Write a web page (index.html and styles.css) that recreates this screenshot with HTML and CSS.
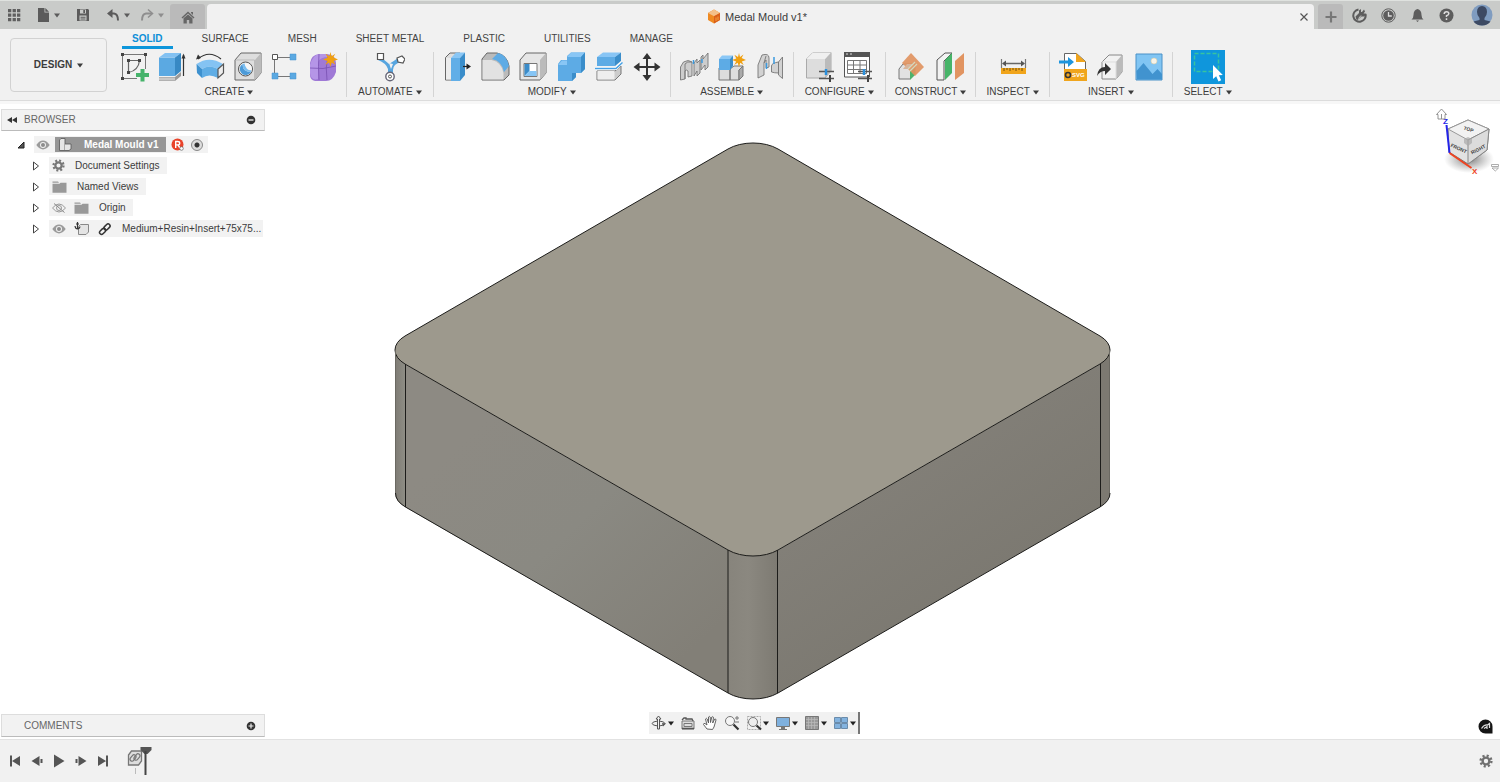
FILE: index.html
```html
<!DOCTYPE html>
<html lang="en">
<head>
<meta charset="utf-8">
<title>Medal Mould v1*</title>
<link rel="stylesheet" href="styles.css">
</head>
<body>
<svg class="defs" aria-hidden="true">
  <defs>
    <linearGradient id="gLeft" x1="0.1" y1="0.3" x2="0.75" y2="1">
      <stop offset="0" stop-color="#8d8a83"/><stop offset=".45" stop-color="#8a8982"/><stop offset="1" stop-color="#827f77"/>
    </linearGradient>
    <linearGradient id="gRight" x1="0.3" y1="0.2" x2="0.7" y2="0.8">
      <stop offset="0" stop-color="#84817a"/><stop offset="1" stop-color="#7a776f"/>
    </linearGradient>
    <linearGradient id="gFront" x1="0" x2="1">
      <stop offset="0" stop-color="#87847c"/><stop offset=".4" stop-color="#8b8880"/><stop offset="1" stop-color="#7d7a72"/>
    </linearGradient>
    <linearGradient id="gSideL" x1="0" x2="1"><stop offset="0" stop-color="#7e7b74"/><stop offset="1" stop-color="#8e8d85"/></linearGradient>
    <radialGradient id="gShadow"><stop offset="0" stop-color="#555" stop-opacity=".8"/><stop offset="1" stop-color="#888" stop-opacity="0"/></radialGradient>
    <symbol id="caret" viewBox="0 0 6 5"><path d="M0 .5h6L3 4.500z" fill="currentColor"/></symbol>
    <symbol id="eye" viewBox="0 0 14 10"><path d="M.3 5Q3.500.6 7 .6T13.700 5Q10.500 9.400 7 9.400T.3 5z" fill="#9b9b9b"/><circle cx="7" cy="5" r="3" fill="#f1f1f1"/><circle cx="7" cy="5" r="2" fill="#8c8c8c"/></symbol>
    <symbol id="folder" viewBox="0 0 15 12"><path d="M.5.5h5.500l1 1.200H.5zM.5 2.700h7l1-1h6v10H.5z" fill="#999"/></symbol>
    <symbol id="gear" viewBox="0 0 14 14"><g fill="none" stroke="currentColor"><circle cx="7" cy="7" r="3.400" stroke-width="2.400"/><circle cx="7" cy="7" r="5.400" stroke-width="2.400" stroke-dasharray="2.120 2.120"/></g></symbol>
    <symbol id="closed" viewBox="0 0 8 10"><path d="M1.500 1L6.500 5 1.500 9z" fill="#fff" stroke="#444"/></symbol>
    <symbol id="burst" viewBox="0 0 14 14"><path d="M7 0l1 4 3.500-2.400L9.600 5 14 7 9.800 8.500l1.900 3.400L8.200 9.800 7 14 5.700 9.800 2.200 11.900l2-3.500L0 7l4.300-1.600L2.400 1.700 6 4z" fill="#f0a010"/></symbol>
  </defs>
</svg>

<header class="titlebar">
  <nav class="quick" aria-label="Quick access">
    <button class="tool" aria-label="Data panel"><svg width="14" height="14" fill="#5f5f5f"><path d="M1 1h3.300v3.300H1zM5.600 1h3.300v3.300H5.600zM10 1h3.300v3.300H10zM1 5.500h3.300v3.300H1zM5.600 5.500h3.300v3.300H5.600zM10 5.500h3.300v3.300H10zM1 10h3.300v3.300H1zM5.600 10h3.300v3.300H5.600zM10 10h3.300v3.300H10z"/></svg></button>
    <button class="tool" aria-label="File"><svg width="14" height="16"><path d="M2 1h6.500v4.500H13V15H2z" fill="#5b5b5b"/><path d="M9.300 1L13 4.700H9.300z" fill="#5b5b5b"/></svg><svg class="caret" width="6" height="5"><use href="#caret"/></svg></button>
    <button class="tool" aria-label="Save"><svg width="16" height="14"><path d="M2 1h11l1 1v11H2z" fill="#5b5b5b"/><path d="M5 1.500h6v4H5zM4.500 7.500h7v5h-7z" fill="#c9cbc9"/><path d="M8.300 2h1.700v3H8.300zM5.500 8.800h5v1h-5zM5.500 10.600h5v1h-5z" fill="#5b5b5b"/></svg></button>
    <span class="history">
      <button class="tool" aria-label="Undo"><svg width="14" height="14"><path d="M5 5.500h3q4 .5 4 7" fill="none" stroke="#5b5b5b" stroke-width="2"/><path d="M6.500 1v9L1 5.500z" fill="#5b5b5b"/></svg><svg class="caret" width="6" height="5"><use href="#caret"/></svg></button>
      <button class="tool faded" aria-label="Redo"><svg width="14" height="14"><path d="M12 5.500H6q-4 .5-4 7" fill="none" stroke="currentColor" stroke-width="2"/><path d="M8 1.500L12.500 5.500 8 9.500" fill="none" stroke="currentColor" stroke-width="1.500"/></svg><svg class="caret" width="6" height="5"><use href="#caret"/></svg></button>
    </span>
  </nav>
  <button class="hometab" aria-label="Home"><svg width="14" height="13"><path d="M7 .5l6.500 6-1 1L7 2.500l-5.500 5-1-1z" fill="#666"/><path d="M10 1h2v3l-2-2zM2.500 7.300L7 3.500l4.500 3.800V12.500h-3.300V9H5.800v3.500H2.500z" fill="#666"/></svg></button>
  <div class="doctab">
    <h1 class="doctitle"><svg width="14" height="15"><path d="M1 4l6-3.500L13 4v7l-6 3.500L1 11z" fill="#ef8a22"/><path d="M1 4l6-3.500L13 4 7 7.200z" fill="#f4c08a"/><path d="M7 7.200L13 4v7l-6 3.500z" fill="#d9601c"/><path d="M9 8.500v3.500M11 7.500V11" stroke="#f7a13c"/></svg><span>Medal Mould v1*</span></h1>
    <button class="close" aria-label="Close"><svg width="10" height="10"><path d="M1.500 1.500l7 7M8.500 1.500l-7 7" stroke="#555" stroke-width="1.200"/></svg></button>
  </div>
  <button class="newtab" aria-label="New tab"><svg width="12" height="12"><path d="M6 .5v11M.5 6h11" stroke="#777" stroke-width="2.200"/></svg></button>
  <nav class="account" aria-label="Account">
    <button class="tool" aria-label="Extensions"><svg width="15" height="15"><path d="M6.500 1.400A6.200 6.200 0 1 0 13.500 6" fill="none" stroke="#5d5d5d" stroke-width="2"/><path d="M3.500 8.500L7 5V2.500l2-1.500v3h1l2-2.500 1 2-1.500 2 2.500 0-1.500 3H9.500L5.500 12q-1.800-1-2-3.500z" fill="#5d5d5d"/><path d="M6.500 10.500l2.500-3" stroke="#c9cbc9"/></svg></button>
    <button class="tool" aria-label="Job status"><svg width="15" height="15"><circle cx="7.500" cy="7.500" r="6.700" fill="none" stroke="#5d5d5d"/><circle cx="7.500" cy="7.500" r="5.300" fill="#5d5d5d"/><path d="M7.500 4v4h3.300" fill="none" stroke="#ddd" stroke-width="1.300"/></svg></button>
    <button class="tool" aria-label="Notifications"><svg width="15" height="15"><path d="M7.500 1q4 1 4 6 0 3 2 4.500h-12Q3.500 10 3.500 7q0-5 4-6zM6 12.500h3L7.500 14z" fill="#5d5d5d"/></svg></button>
    <button class="tool" aria-label="Help"><svg width="15" height="15"><circle cx="7.500" cy="7.500" r="7" fill="#5d5d5d"/><path d="M5.200 6q0-2.300 2.300-2.300T9.800 5.700Q9.800 7 7.500 7.700v1.200M7.500 10.300v1.700" fill="none" stroke="#ddd" stroke-width="1.500"/></svg></button>
    <button class="tool avatar" aria-label="Profile"><svg width="22" height="22"><circle cx="11" cy="11" r="10.500" fill="#7f9cc0"/><path d="M11 2q5 .3 5 6 0 3.500-2.500 6v2l6 1.500Q16.500 21.500 11 21.500T2.500 17.500l6-1.500v-2Q6 11.500 6 8q0-5.700 5-6z" fill="#3d4a63"/></svg></button>
  </nav>
</header>

<section class="ribbon">
  <button class="workspace">DESIGN <svg class="caret" width="6" height="5"><use href="#caret"/></svg></button>
  <div class="ribbon-main">
    <nav class="tabs" aria-label="Toolbar tabs">
      <a class="tab active" href="#solid">SOLID</a><a class="tab" href="#surface">SURFACE</a><a class="tab" href="#mesh">MESH</a><a class="tab" href="#sheet">SHEET METAL</a><a class="tab" href="#plastic">PLASTIC</a><a class="tab" href="#utilities">UTILITIES</a><a class="tab" href="#manage">MANAGE</a>
    </nav>
    <div class="groups">
      <div class="group first">
        <div class="icons">
          <button class="tool" aria-label="Create sketch"><svg width="30" height="32"><path d="M3 3.500h24M3.500 3v24M26.500 3v15M3 27.500h15" fill="none" stroke="#777"/><path d="M9.500 9.500h11q-1 10-11 12z" fill="none" stroke="#666" stroke-width="1.200"/><path d="M2 2h3v3H2zM25 2h3v3h-3zM2 26h3v3H2zM8 8h3v3H8zM19 8h3v3h-3zM8 20h3v3H8z" fill="#444"/><path d="M21.500 18h4v4h4.500v4h-4.500v4.500h-4V26H17v-4h4.500z" fill="#46b36b"/></svg></button>
          <button class="tool" aria-label="Extrude"><svg width="30" height="32"><path d="M2 26h16l6-5v4l-6 5H2z" fill="#999"/><path d="M2 26.500h16v3H2z" fill="#c8c8c8"/><path d="M2 6.500h16V25H2z" fill="#5ba9e2"/><path d="M2 6.500L8 2h16l-6 4.500z" fill="#82c1f2"/><path d="M18 6.500L24 2v18l-6 5z" fill="#3889c4"/><path d="M26.500 25V4" stroke="#333" stroke-width="1.200"/><path d="M24.500 7.500l2-5 2 5z" fill="#333"/></svg></button>
          <button class="tool" aria-label="Revolve"><svg width="30" height="32"><path d="M3 8Q14-1.500 26 8" fill="none" stroke="#333" stroke-width="1.200"/><path d="M1 8.500l2-5 3 3.500z" fill="#333"/><path d="M1.500 13Q14 4.500 28 13l-5 5Q14 13 7 18z" fill="#84c3f3"/><path d="M1.500 13L7 18v9L2 22z" fill="#3d91cf"/><path d="M7 18q7-5 16 0v9q-9-5-16 0z" fill="#5fade5"/><path d="M23 18l5.500-5v9L23 27z" fill="#eee" stroke="#555" stroke-width="1.200"/></svg></button>
          <button class="tool" aria-label="Hole"><svg width="30" height="32"><path d="M2 9l6-7h20v20l-6 7H2z" fill="#dedede" stroke="#666"/><path d="M2.500 9h19v19.500" fill="none" stroke="#bbb"/><path d="M22 9l6-7v20l-6 7z" fill="#bbb"/><circle cx="12.500" cy="18" r="7" fill="#eee" stroke="#555"/><path d="M9.500 13a6 6 0 1 0 8.500 8q-8.500 0-8.500-8z" fill="#4b9ad8"/><path d="M11.500 12.500a5.500 5.500 0 0 1 7 7q-6.500-.5-7-7z" fill="#f6f6f6"/><path d="M9.500 13q0 8 8.500 8l.5-1.500q-6-.5-7-7z" fill="#79bdf0"/></svg></button>
          <button class="tool" aria-label="Rectangular pattern"><svg width="30" height="32"><path d="M7 6.500h14M3.500 9v14M7 25.500h14" stroke="#777"/><path d="M1.500 3.500h5v5h-5z" fill="#fff" stroke="#555"/><path d="M19 3h6v6h-6zM1 22h6v6H1zM19 22h6v6h-6z" fill="#5ba9e2" stroke="#4592cc" stroke-width=".5"/></svg></button>
          <button class="tool" aria-label="Create form"><svg width="30" height="32"><path d="M1 12Q2 4 10 3h8q9 1 9 9v9q-3 9-10 9H6q-5-1-5-6z" fill="#9f79d6"/><path d="M1 14Q4 4 10 3h7l3 3q-9 0-11 5v17q-7 2-8-6z" fill="#bfa1ee" opacity=".7"/><path d="M10 3q-1 12 0 26M19 5q-3 12-1 24M1 17q13 2 26-2" fill="none" stroke="#7850b1" stroke-width=".8"/><use href="#burst" x="14" y="1" width="15" height="15"/></svg></button>
        </div>
        <button class="label">CREATE <svg class="caret" width="6" height="5"><use href="#caret"/></svg></button>
      </div>
      <div class="group wide">
        <div class="icons"><button class="tool" aria-label="Automated modeling"><svg width="30" height="32"><path d="M4 5q8 6 10 8 5-3 9-6l3 4q-8 2-8 8v6h-5v-7q-2-6-10-9z" fill="#57a5df"/><path d="M14 12l4 1-2 5z" fill="#f1f1f1"/><path d="M2.500 2.500h6v6h-6z" fill="#fff" stroke="#555" stroke-width="1.200"/><path d="M22 7l5-2 3 3-2 4-5-1z" fill="#fff" stroke="#555" stroke-width="1.200"/><circle cx="15" cy="25.500" r="4.200" fill="#fff" stroke="#667" stroke-width="1.400"/><circle cx="15" cy="25.500" r="1.500" fill="none" stroke="#555"/></svg></button></div>
        <button class="label">AUTOMATE <svg class="caret" width="6" height="5"><use href="#caret"/></svg></button>
      </div>
      <div class="group">
        <div class="icons">
          <button class="tool" aria-label="Press pull"><svg width="30" height="32"><path d="M3.500 6.500L8 2h10l-4 5v22H3.500z" fill="#ddd" stroke="#666"/><path d="M4 7h5v21.500H4z" fill="#ececec"/><path d="M9 7h9v23H9z" fill="#61aee7"/><path d="M9 7l5-5.500h9L18 7z" fill="#88c6f5"/><path d="M18 7l5-5.500V24l-5 6z" fill="#3a8dca"/><path d="M21 15.500h5" stroke="#222" stroke-width="1.200"/><path d="M24.500 12.500l4.500 3-4.500 3z" fill="#222"/></svg></button>
          <button class="tool" aria-label="Fillet"><svg width="30" height="32"><path d="M2 8l5-6h10q10 2 12 13v9l-5 5H2z" fill="#bbb" stroke="#666"/><path d="M2.500 9h9q10 2 12 13v6.500h-21z" fill="#e2e2e2"/><path d="M12 8l6-6q9 2 11 13l-5 6Q22 10 12 8z" fill="#5eabe5"/></svg></button>
          <button class="tool" aria-label="Shell"><svg width="30" height="32"><path d="M2 9l6-7h20v20l-6 7H2z" fill="#e6e6e6" stroke="#666"/><path d="M22 9l6-7v20l-6 7z" fill="#bbb"/><path d="M6 12.500h13v13H6z" fill="#fff" stroke="#777"/><path d="M6.500 13h5v7l-5 5z" fill="#3a8cca"/><path d="M6.500 25l5-5h7v5z" fill="#86c5f5"/></svg></button>
          <button class="tool" aria-label="Combine"><svg width="30" height="32"><path d="M2 13l3-4h6V5l4-3.500h14V18l-4 4h-5v4l-4 4H2z" fill="#5dabe5"/><path d="M11 6l4-4.500h14L25 6zM2 14l4-4.500h5V14z" fill="#89c6f5"/><path d="M25 6l4-4.500V18l-4 4zM16 22h4v4l-4 4z" fill="#3a8dca"/></svg></button>
          <button class="tool" aria-label="Offset face"><svg width="30" height="32"><path d="M3 20h18l6-5v8l-6 6H3z" fill="#ccc" stroke="#777"/><path d="M3.500 20h17v8.500h-17z" fill="#eee"/><path d="M3 6h18v9H3z" fill="#5dabe5"/><path d="M3 6l6-4.500h18L21 6z" fill="#88c5f5"/><path d="M21 6l6-4.500V10l-6 5z" fill="#3a8dca"/><path d="M1 17.500h21l6-6" fill="none" stroke="#fff" stroke-width="3"/><path d="M1 17.500h21l6.500-6" fill="none" stroke="#45a0e4" stroke-width="1.500"/></svg></button>
          <button class="tool" aria-label="Move"><svg width="30" height="32"><path d="M15 5v22M4 16h22" stroke="#333" stroke-width="2"/><path d="M15 2l4.500 6h-9zM15 30l4.500-6h-9zM1.500 16l6-4.500v9zM28.500 16l-6-4.500v9z" fill="#333"/></svg></button>
        </div>
        <button class="label">MODIFY <svg class="caret" width="6" height="5"><use href="#caret"/></svg></button>
      </div>
      <div class="group">
        <div class="icons">
          <button class="tool" aria-label="New component"><svg width="30" height="32"><g fill="#cdcdcd" stroke="#777" stroke-width=".9"><path d="M1.500 16l3-5q5-3 8.500 0v14l-4 1v-6q-2-2-3 0v8l-4.500 1z"/><path d="M6 28V13q2-3 7-2" fill="none"/><path d="M15 12l3-4v4l3-3v13l-3 3v-5l-3 5z"/><path d="M22 6l2-2v4l5-6v14l-3 3v-5l-4 5z"/></g><path d="M14.500 9v4M23 8v4" stroke="#3b9ae0" stroke-width="1.500"/></svg></button>
          <button class="tool" aria-label="Joint"><svg width="30" height="32"><path d="M2 17h11v12H2zM13 18l4-3h9l-4 4v10h-9z" fill="#ddd" stroke="#777"/><path d="M22 19l4-4v10l-4 4z" fill="#aaa" stroke="#777"/><path d="M2 8h11v11H2z" fill="#5dabe5"/><path d="M2 8l3-3.500h11L13 8z" fill="#8ac7f6"/><path d="M13 8l3-3.500V15l-3 4z" fill="#3a8dca"/><use href="#burst" x="15" y="2" width="14" height="14"/></svg></button>
          <button class="tool" aria-label="As-built joint"><svg width="30" height="32"><g fill="#d2d2d2" stroke="#777" stroke-width=".9"><path d="M3 14l4-10q7-2 7 3v9l-3 1V9L9 12v12l-6 3z"/><path d="M9 12l2-7" fill="none"/><path d="M27.500 6l-4 5v13l4 3.500z"/><path d="M23.500 11q-7 1-7 4v6q3 1 7 1z"/></g><path d="M11.500 12v6M19 6v7" stroke="#3b9ae0" stroke-width="1.500"/></svg></button>
        </div>
        <button class="label">ASSEMBLE <svg class="caret" width="6" height="5"><use href="#caret"/></svg></button>
      </div>
      <div class="group wide">
        <div class="icons">
          <button class="tool" aria-label="Configure model"><svg width="30" height="32"><path d="M1.500 8L8 1.500h18V20l-6 7H1.500z" fill="#ddd" stroke="#aaa"/><path d="M20 8l6-6.500V20l-6 7z" fill="#bbb"/><path d="M1.500 8L8 1.500h18L20 8z" fill="#f0f0f0"/><path d="M14 20.500h15M14 27.500h15" stroke="#555" stroke-width="1.500"/><path d="M25 24v7" stroke="#444" stroke-width="2"/><path d="M21 18v6" stroke="#2b90dd" stroke-width="2.500"/></svg></button>
          <button class="tool" aria-label="Configuration table"><svg width="30" height="32"><path d="M1.500 2h25v24h-25z" fill="#fff" stroke="#555"/><path d="M1 1h26v5H1z" fill="#555"/><path d="M3 3h2M7 3h2" stroke="#ddd"/><path d="M4.500 9.500h19v13h-19zM4 14h20M4 18.500h20M10.500 9v14M17 9v14" fill="none" stroke="#777"/><path d="M15 20.500h14M15 27.500h14" stroke="#555" stroke-width="1.500"/><path d="M25 24v7" stroke="#444" stroke-width="2"/><path d="M21 18v6" stroke="#2b90dd" stroke-width="2.500"/></svg></button>
        </div>
        <button class="label">CONFIGURE <svg class="caret" width="6" height="5"><use href="#caret"/></svg></button>
      </div>
      <div class="group snug">
        <div class="icons">
          <button class="tool" aria-label="Offset plane"><svg width="30" height="32"><path d="M2 18l4-5h12v10l-5 5H2z" fill="#e2e2e2" stroke="#777"/><path d="M13 19l5-5v10l-5 5z" fill="#4db26d"/><path d="M14 2l13 14-9 9-13-13z" fill="#e19461" opacity=".92"/><path d="M6 18l4-5h6l-5 5z" fill="#d8b59c"/><path d="M11 18l7-7M13 20l7-7" stroke="#d5d8bd" stroke-width="1.300"/></svg></button>
          <button class="tool" aria-label="Midplane"><svg width="30" height="32"><path d="M2 9l8-7h7L9 10v19H2z" fill="#f2f2f2" stroke="#555"/><path d="M10 9l7-7v20l-7 7z" fill="#47b469"/><path d="M20 10l9-8v20l-9 7z" fill="#e19461"/></svg></button>
        </div>
        <button class="label">CONSTRUCT <svg class="caret" width="6" height="5"><use href="#caret"/></svg></button>
      </div>
      <div class="group mid">
        <div class="icons"><button class="tool" aria-label="Measure"><svg width="30" height="32"><path d="M3.500 8v9M27.500 8v9" stroke="#777" stroke-width="1.200"/><path d="M6 12.500h19" stroke="#666" stroke-width="1.500"/><path d="M4 12.500l4-3v6zM27 12.500l-4-3v6z" fill="#555"/><path d="M3 17h25v6H3z" fill="#f1a51b"/><path d="M6 17v3M9 17v2M12 17v3M15 17v2M18 17v3M21 17v2M24 17v3" stroke="#75500e"/></svg></button></div>
        <button class="label">INSPECT <svg class="caret" width="6" height="5"><use href="#caret"/></svg></button>
      </div>
      <div class="group">
        <div class="icons">
          <button class="tool" aria-label="Insert SVG"><svg width="30" height="32"><path d="M6.500 2.500h12l9 8v18h-21z" fill="#fff" stroke="#666"/><path d="M18 2l10 9H18z" fill="#f0a51d"/><path d="M6 18h23v12H6z" fill="#f0a51d"/><path d="M1 9.500h9V6l6 5-6 5v-3.500H1z" fill="#1e95de"/><circle cx="10" cy="24" r="2.500" fill="none" stroke="#333" stroke-width="1.600"/><text class="svgbadge" x="14" y="26">SVG</text></svg></button>
          <button class="tool" aria-label="Insert derive"><svg width="30" height="32"><path d="M6 11l7-7h13v17l-6 7H6z" fill="#f2f2f2" stroke="#888"/><path d="M20 11l6-7v17l-6 7z" fill="#bbb"/><path d="M6 11h14v17" fill="none" stroke="#ddd"/><path d="M1 25q1-9 8-9v-4l6 6-6 6v-4q-5 0-8 5z" fill="#333"/></svg></button>
          <button class="tool" aria-label="Canvas"><svg width="30" height="32"><path d="M2 3h26v26H2z" fill="#81c5f3" stroke="#4a91c7"/><path d="M2.500 20l7-8 9 11 5-5 4.500 5v5.500h-25z" fill="#4193cf"/><circle cx="20" cy="10" r="3" fill="#f7f3e8" stroke="#d8cda7" stroke-width=".6"/></svg></button>
        </div>
        <button class="label">INSERT <svg class="caret" width="6" height="5"><use href="#caret"/></svg></button>
      </div>
      <div class="group wide last">
        <div class="icons"><button class="tool select" aria-label="Select"><svg width="34" height="34"><path d="M3.500 3.500h24v18h-24z" fill="none" stroke="#37c3a0" stroke-width="1.500" stroke-dasharray="4 2"/><path d="M22 15v14l3.200-2.800 2.300 5.300 2.700-1.300-2.400-5 4-.2z" fill="#fff"/></svg></button></div>
        <button class="label">SELECT <svg class="caret" width="6" height="5"><use href="#caret"/></svg></button>
      </div>
    </div>
  </div>
</section>

<main class="viewport">
  <svg class="model" viewBox="0 104 1500 635" role="img" aria-label="Medal mould body">
    <path d="M395 350V493a35 20 0 0 0 10 14V364z" fill="url(#gSideL)"/>
    <path d="M405 364V507L728 693V550z" fill="url(#gLeft)"/>
    <path d="M728 550V693a35 20 0 0 0 50 0V550z" fill="url(#gFront)"/>
    <path d="M778 550V693L1100 507V364z" fill="url(#gRight)"/>
    <path d="M1100 364V507a35 20 0 0 0 10-14V350z" fill="#7c7971"/>
    <path d="M728 149a35 20 0 0 1 50 0L1100 336a35 20 0 0 1 0 28L778 550a35 20 0 0 1-50 0L405 364a35 20 0 0 1 0-28z" fill="#9d998d" stroke="#1c1c1a"/>
    <path d="M395.500 493a35 20 0 0 0 10 14L728 693a35 20 0 0 0 50 0L1100 507a35 20 0 0 0 10-14M405.500 364V507M728 550V693M777.500 550V693M1100.500 364V507" fill="none" stroke="#1c1c1a"/>
    <path d="M395.500 350V493M1109.500 350V493" stroke="#6b6962" fill="none"/>
  </svg>

  <aside class="side">
    <section class="browser">
      <header class="panel">
        <button class="tool collapse" aria-label="Collapse"><svg width="10" height="6"><path d="M5 0v6L0 3zM10 0v6L5 3z" fill="#333"/></svg></button>
        <h2 class="panel-title">BROWSER</h2>
        <button class="tool" aria-label="Minimise"><svg width="10" height="10"><circle cx="5" cy="5" r="4.300" fill="#333"/><path d="M2.500 5h5" stroke="#eee" stroke-width="1.300"/></svg></button>
      </header>
      <ul class="tree">
        <li class="row root">
          <button class="tool expander" aria-label="Collapse"><svg width="8" height="8"><path d="M7 1v6H1z" fill="#555" stroke="#222"/></svg></button>
          <span class="item">
            <svg width="14" height="10"><use href="#eye"/></svg>
            <span class="picked"><svg width="16" height="15"><path d="M2.500 3l1.500-1.500h4V7h6v5L12 13.500H2.500z" fill="#e6e6e6" stroke="#555" stroke-width=".8"/><path d="M7.500 3v10" stroke="#aaa"/></svg><span>Medal Mould v1</span></span>
            <svg class="badge" width="13" height="13"><circle cx="6.500" cy="6.500" r="6" fill="#e9432a"/><path d="M4.700 10V3.500h2q2 0 2 1.700t-2 1.700h-2M7 7l2 3" fill="none" stroke="#fff" stroke-width="1.400"/><circle cx="10.500" cy="10.500" r="1.800" fill="#fff" stroke="#666" stroke-width=".7"/></svg>
            <input class="radio" type="radio" checked aria-label="Activate Medal Mould v1">
          </span>
        </li>
        <li class="row"><button class="tool expander" aria-label="Expand"><svg width="8" height="10"><use href="#closed"/></svg></button><span class="item"><svg class="grey" width="13" height="13"><use href="#gear"/></svg><span class="name">Document Settings</span></span></li>
        <li class="row"><button class="tool expander" aria-label="Expand"><svg width="8" height="10"><use href="#closed"/></svg></button><span class="item"><svg width="15" height="12"><use href="#folder"/></svg><span class="name">Named Views</span></span></li>
        <li class="row"><button class="tool expander" aria-label="Expand"><svg width="8" height="10"><use href="#closed"/></svg></button><span class="item"><svg width="14" height="10"><path d="M.5 5Q7-3 13.500 5 7 13 .5 5z" fill="none" stroke="#999"/><circle cx="7" cy="5" r="2.500" fill="none" stroke="#999"/><path d="M2 .5l10.500 9" stroke="#888"/></svg><svg width="15" height="12"><use href="#folder"/></svg><span class="name">Origin</span></span></li>
        <li class="row long"><button class="tool expander" aria-label="Expand"><svg width="8" height="10"><use href="#closed"/></svg></button><span class="item"><svg width="14" height="10"><use href="#eye"/></svg><svg width="16" height="15"><path d="M4.500 5.500l2-2h8v7.500L12 13.500H4.500z" fill="#e4e4e4" stroke="#888"/><path d="M3.500 1v6.500M1 5q.5 3 2.500 3T6 5.500M2 3h3" fill="none" stroke="#333" stroke-width="1.200"/></svg><svg width="14" height="14"><g fill="none" stroke="#333" stroke-width="1.500"><rect x="5.500" y="3" width="7" height="4" rx="2" transform="rotate(-45 9 5)"/><rect x="1" y="7" width="7" height="4" rx="2" transform="rotate(-45 5 9)"/></g></svg><span class="name">Medium+Resin+Insert+75x75...</span></span></li>
      </ul>
    </section>
    <section class="panel comments">
      <h2 class="panel-title">COMMENTS</h2>
      <button class="tool" aria-label="Add comment"><svg width="10" height="10"><circle cx="5" cy="5" r="4.300" fill="#333"/><path d="M2.500 5h5M5 2.500v5" stroke="#eee" stroke-width="1.200"/></svg></button>
    </section>
  </aside>

  <nav class="navbar" aria-label="View controls">
    <button class="tool" aria-label="Orbit"><svg width="16" height="16"><ellipse cx="7.500" cy="8.500" rx="6.300" ry="2.300" fill="none" stroke="#555"/><path d="M6.500 14V4H5l2.500-3L10 4H8.500v10z" fill="#f1f1f1" stroke="#555"/><path d="M11 8l4 .5-3 3z" fill="#555"/></svg><svg class="caret" width="6" height="5"><use href="#caret"/></svg></button>
    <button class="tool" aria-label="Look at"><svg width="16" height="16"><path d="M2 6h12v8H2zM4 8.500h8v3H4z" fill="#ddd" stroke="#777"/><path d="M2 5l2-2h2v1h6l1 2M2 13.500h12" fill="none" stroke="#555" stroke-width="1.300"/></svg></button>
    <button class="tool" aria-label="Pan"><svg width="16" height="16"><path d="M5 14L1.500 9.500q0-1.500 1.500-1L5 10 3.500 4q.7-1.500 1.700 0l1.300 4L6.500 2q1-1.200 1.700 0l.3 5.500L9.800 2q1.200-.8 1.700.3L10.700 8l2-4q1.300-.4 1.300 1L12 12l-1.500 2.500z" fill="#fff" stroke="#555" stroke-width=".9"/></svg></button>
    <button class="tool" aria-label="Zoom"><svg width="16" height="16"><circle cx="6" cy="6" r="4.500" fill="#f5f5f5" stroke="#777"/><path d="M9.500 9.500l5 5" stroke="#333" stroke-width="2.200"/><path d="M13 1v4M11 3h4M11 7h4" stroke="#777"/></svg></button>
    <button class="tool" aria-label="Fit"><svg width="16" height="16"><path d="M1.500 1.500h13v13h-13z" fill="none" stroke="#aaa" stroke-dasharray="2 1"/><circle cx="7" cy="7" r="4.500" fill="#eee" stroke="#777"/><path d="M10.500 10.500l4.500 4" stroke="#333" stroke-width="2.200"/></svg><svg class="caret" width="6" height="5"><use href="#caret"/></svg></button>
    <button class="tool" aria-label="Display settings"><svg width="16" height="16"><path d="M1.500 2.500h13v9h-13z" fill="#7fb1df" stroke="#777"/><path d="M6 12h4v2h2v1H4v-1h2z" fill="#777"/></svg><svg class="caret" width="6" height="5"><use href="#caret"/></svg></button>
    <button class="tool" aria-label="Grid"><svg width="16" height="16"><path d="M1.500 1.500h13v13h-13z" fill="#999" stroke="#777"/><path d="M4.500 2v12M7.500 2v12M10.500 2v12M2 4.500h12M2 7.500h12M2 10.500h12" stroke="#bbb" stroke-width=".7"/></svg><svg class="caret" width="6" height="5"><use href="#caret"/></svg></button>
    <button class="tool" aria-label="Viewports"><svg width="16" height="16"><path d="M1.500 2.500h6v5h-6zM8.500 2.500h6v5h-6zM1.500 8.500h6v5h-6zM8.500 8.500h6v5h-6z" fill="#83b3df" stroke="#6b8cab"/></svg><svg class="caret" width="6" height="5"><use href="#caret"/></svg></button>
  </nav>

  <svg class="viewcube" width="66" height="76" viewBox="1434 104 66 76" role="img" aria-label="View cube">
    <ellipse cx="1469" cy="159" rx="25" ry="14" fill="url(#gShadow)"/>
    <path d="M1448 129l20-9 21 9-2 21-19 14-19-12z" fill="#e2e2e2" stroke="#777"/>
    <path d="M1448 129l20-9 21 9-21 11z" fill="#f2f2f2" stroke="#999"/>
    <path d="M1468 140l21-11-2 21-19 14z" fill="#dcdcdc" stroke="#888"/>
    <path d="M1464 139l4-2 4 2v4l-4 3-4-3z" fill="#aaa" opacity=".7"/>
    <text class="cubetext" text-anchor="middle" transform="translate(1468 131) rotate(18)">TOP</text>
    <text class="cubetext" text-anchor="middle" transform="translate(1458 150) rotate(24)">FRONT</text>
    <text class="cubetext" text-anchor="middle" transform="translate(1479 151) rotate(-27)">RIGHT</text>
    <path d="M1449.500 153l-3-28" stroke="#2424e8" stroke-width="2"/><path d="M1449.500 153l22 15" stroke="#ef4321" stroke-width="2"/>
    <text class="axis axis-z" x="1443" y="124">Z</text><text class="axis axis-x" x="1472" y="174">X</text>
    <path d="M1436.500 114.500l5-5.500 5 5.500h-1.500v4.500h-7v-4.500zM1441.500 114v5" fill="#fff" stroke="#888" stroke-width=".9"/>
    <path d="M1491.500 164.500h7v2h-7zM1492 168h6.500l-3.200 3z" fill="#fff" stroke="#999" stroke-width=".8"/>
  </svg>
  <button class="tool assistant" aria-label="Assistant"><svg width="15" height="15"><path d="M7.500.5a7 7 0 0 1 7 7v7h-7a7 7 0 0 1 0-14z" fill="#151515"/><path d="M3.500 9.500Q6 5.500 9.500 6l2-1.500V9M6 9.500L9 7.500V10" fill="none" stroke="#ddd" stroke-width="1.200"/></svg></button>
</main>

<footer class="timeline">
  <button class="tool" aria-label="Go to start"><svg width="12" height="12"><path d="M1 .5h2v11H1zM11 1v10L3 6z" fill="#555"/></svg></button>
  <button class="tool" aria-label="Step back"><svg width="12" height="12"><path d="M8.500 1v10L.5 6zM9.500 4h2v4h-2z" fill="#555"/></svg></button>
  <button class="tool" aria-label="Play"><svg width="12" height="14"><path d="M1 .5v13L11.500 7z" fill="#555"/></svg></button>
  <button class="tool" aria-label="Step forward"><svg width="12" height="12"><path d="M3.500 1v10l8-5zM.5 4h2v4h-2z" fill="#555"/></svg></button>
  <button class="tool" aria-label="Go to end"><svg width="12" height="12"><path d="M9 .5h2v11H9zM1 1v10l8-5z" fill="#555"/></svg></button>
  <button class="tool feature" aria-label="Insert feature"><svg width="26" height="32"><path d="M2.500 10l3-4h10v10l-3 4h-10z" fill="#ddd" stroke="#777" stroke-width="1.300"/><g fill="none" stroke="#777" stroke-width="1.200"><rect x="3.500" y="11" width="7" height="4" rx="2" transform="rotate(-50 7 13)"/><rect x="7.500" y="10" width="7" height="4" rx="2" transform="rotate(-50 11 12)"/></g><path d="M9.500 23v6" stroke="#bbb"/><path d="M14.500 2h11v3l-4 4h-3l-4-4z" fill="#555"/><path d="M19.500 6v24" stroke="#444" stroke-width="2"/></svg></button>
  <button class="tool settings" aria-label="Timeline settings"><svg width="14" height="14"><use href="#gear"/></svg></button>
</footer>
</body>
</html>
```

FILE: styles.css
```css
* { box-sizing: border-box; }
body {
  margin: 0;
  height: 100vh;
  display: flex;
  flex-direction: column;
  overflow: hidden;
  background: #fff;
  color: #3c3c3c;
  font: 10px/12px "Liberation Sans", Arial, sans-serif;
}
.defs { position: absolute; width: 0; height: 0; }
svg { display: block; flex: none; }
h1, h2 { margin: 0; font: inherit; }
button { margin: 0; padding: 0; border: 0; background: none; color: inherit; font: inherit; }
.tool { display: flex; align-items: center; gap: 4px; }

/* Title bar */
.titlebar { display: flex; align-items: flex-end; height: 29px; background: #c9cbc9; border-top: 1px solid #dfe2df; }
.quick { display: flex; align-items: center; gap: 15px; height: 28px; padding: 0 6px 0 7px; color: #5b5b5b; }
.history { display: flex; gap: 10px; }
.faded { color: #8e8e8e; }
.hometab, .newtab { display: flex; align-items: center; justify-content: center; height: 25px; background: #bababa; border-radius: 3px 3px 0 0; }
.hometab { width: 35px; padding-top: 2px; }
.newtab { width: 25px; }
.doctab { display: flex; flex: 1; align-items: center; height: 25px; margin: 0 4px 0 2px; padding: 0 5px 0 8px; background: #f1f1f1; border-radius: 4px 4px 0 0; }
.doctitle { display: flex; flex: 1; align-items: center; justify-content: center; gap: 4px; font-size: 11px; }
.account { display: flex; align-items: center; gap: 14px; height: 28px; padding: 0 7px 0 9px; }
.avatar { margin-left: 3px; }

/* Ribbon */
.ribbon { display: flex; height: 75px; background: #f1f1f1; border-bottom: 3px solid #f7f7f7; box-shadow: inset 0 -1px #dcdcdc; }
.workspace { display: flex; align-items: center; justify-content: center; gap: 5px; width: 97px; height: 54px; margin: 9px 12px 0 10px; border: 1px solid #d2d2d2; border-radius: 4px; font-weight: bold; }
.tabs { display: flex; gap: 19px; height: 20px; padding-left: 3px; }
.tab { padding: 4px 10px 0; height: 20px; color: #444; text-decoration: none; white-space: nowrap; }
.tab.active { color: #0d8fd8; font-weight: bold; border-bottom: 3px solid #0d96db; }
.groups { display: flex; padding-top: 1px; }
.group { display: flex; flex-direction: column; align-items: center; gap: 1px; margin-right: 1px; padding: 0 8px; position: relative; }
.group:not(.last)::after { content: ""; position: absolute; right: -1px; top: 2px; width: 1px; height: 45px; background: #d4d4d4; }
.group.first { padding-left: 0; padding-right: 7px; }
.group.wide { padding: 0 11px; }
.group.mid { padding: 0 10px; }
.group.snug { padding: 0 9px; }
.icons { display: flex; align-items: center; gap: 8px; height: 34px; }
.label { display: flex; align-items: center; gap: 3px; height: 14px; white-space: nowrap; }
.select { width: 34px; height: 34px; background: #0f96dc; }
.svgbadge { font: bold 6px "Liberation Sans", sans-serif; fill: #fff; }

/* Viewport */
.viewport { position: relative; display: flex; flex: 1; min-height: 0; }
.model { position: absolute; inset: 0; width: 100%; height: 100%; }
.side { position: relative; display: flex; flex-direction: column; justify-content: space-between; width: 264px; margin-left: 1px; padding: 5px 0 2px; }
.panel { display: flex; align-items: center; height: 22px; padding: 0 8px 0 5px; background: #f2f2f2; border: 1px solid #ddd; border-bottom-color: #bbb; color: #666; }
.panel-title { flex: 1; }
.collapse { width: 17px; }
.comments { height: 23px; padding-left: 22px; }
.tree { display: flex; flex-direction: column; align-items: flex-start; gap: 4px; margin: 5px 0 0; padding: 0; list-style: none; }
.row { display: flex; align-items: center; height: 17px; padding-left: 31px; }
.root { padding-left: 16px; }
.expander { width: 17px; }
.item { display: flex; align-items: center; gap: 8px; height: 17px; padding: 0 7px 0 3px; background: #f2f2f2; white-space: nowrap; }
.name { padding-left: 2px; }
.long .item { padding-right: 2px; }
.root .item { gap: 5px; padding: 0 5px 0 2px; }
.picked { display: flex; align-items: center; gap: 11px; height: 15px; padding: 0 8px 0 2px; background: #969696; color: #fff; font-weight: bold; }
.radio { appearance: none; width: 12px; height: 12px; margin: 0 0 0 2px; border: 1px solid #888; border-radius: 50%; background: radial-gradient(#333 2px, #ddd 3px); }
.grey { color: #777; }
.navbar { position: absolute; left: 50%; bottom: 5px; display: flex; align-items: center; gap: 6px; height: 22px; margin-left: -101px; padding: 0 2px; background: #f1f1f1; border-right: 2px solid #777; color: #222; }
.navbar .tool { gap: 1px; }
.viewcube { position: absolute; top: 0; right: 0; }
.cubetext { font: bold 5px "Liberation Sans", sans-serif; fill: #444; }
.axis { font: bold 8px "Liberation Sans", sans-serif; }
.axis-z { fill: #2424e8; }
.axis-x { fill: #ef4321; }
.assistant { position: absolute; right: 7px; bottom: 5px; }

/* Timeline */
.timeline { display: flex; align-items: center; gap: 10px; height: 43px; padding: 0 7px 0 9px; background: #f1f1f1; border-top: 1px solid #e2e2e2; color: #707070; }
.feature { margin-left: 7px; }
.settings { margin-left: auto; }
```
